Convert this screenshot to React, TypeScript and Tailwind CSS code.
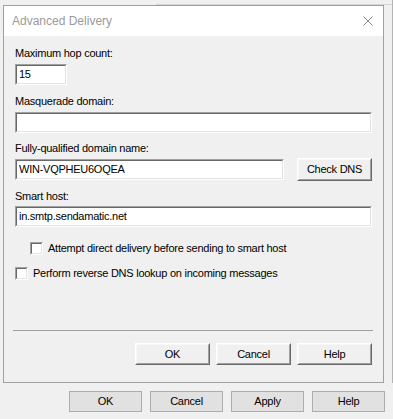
import React from "react";

const font = { fontFamily: '"Liberation Sans", Arial, sans-serif' };

function Sunken({ className = "", children }: { className?: string; children?: React.ReactNode }) {
  return (
    <div className={`border border-t-[#a0a0a0] border-l-[#a0a0a0] border-r-white border-b-white ${className}`}>
      <div className="h-full w-full border border-t-[#696969] border-l-[#696969] border-r-[#e3e3e3] border-b-[#e3e3e3] bg-white flex items-center pl-[2px] text-[11px] leading-[13px] tracking-[-0.25px] text-black">
        {children}
      </div>
    </div>
  );
}

function ClassicButton({ label, className = "" }: { label: string; className?: string }) {
  return (
    <div className={`border border-t-white border-l-white border-r-[#696969] border-b-[#696969] ${className}`}>
      <div className="h-full w-full border border-t-[#f8f8f8] border-l-[#f8f8f8] border-r-[#a0a0a0] border-b-[#a0a0a0] bg-[#f0f0f0] flex items-center justify-center text-[11px] leading-[13px] tracking-[-0.25px] text-black">
        {label}
      </div>
    </div>
  );
}

function FlatButton({ label }: { label: string }) {
  return (
    <div className="w-[73px] h-[21px] border border-[#adadad] bg-[#e1e1e1] flex items-center justify-center text-[11px] leading-[13px] tracking-[-0.25px] text-black">
      {label}
    </div>
  );
}

function CheckBox() {
  return (
    <div className="w-[13px] h-[13px] border border-t-[#a0a0a0] border-l-[#a0a0a0] border-r-white border-b-white shrink-0">
      <div className="w-full h-full border border-t-[#696969] border-l-[#696969] border-r-[#e3e3e3] border-b-[#e3e3e3] bg-white" />
    </div>
  );
}

function Label({ text }: { text: string }) {
  return (
    <div className="h-[13px] text-[11px] leading-[13px] tracking-[-0.25px] text-black whitespace-nowrap">{text}</div>
  );
}

export default function App() {
  return (
    <div className="w-[393px] h-[419px] bg-[#f0f0f0] overflow-hidden flex flex-col" style={font}>
      <div className="w-full h-[383px] border-r border-r-[#b4b4b4] flex flex-col">
        <div className="h-[5px] pt-[4px]">
          <div className="ml-[156px] h-[1px] bg-[#d4d4d4]" />
        </div>
        <div className="ml-[3px] w-[381px] h-[378px] border border-[#a0a0a0] flex flex-col bg-[#f0f0f0]">
          <div className="h-[30px] bg-white flex items-center justify-between pl-[8px] pr-[10px]">
            <span className="text-[12px] text-[#9a9a9a] leading-[14px]">Advanced Delivery</span>
            <svg width="10" height="10" viewBox="0 0 10 10">
              <path d="M0.5 0.5 L9.5 9.5 M9.5 0.5 L0.5 9.5" stroke="#8a8a8a" strokeWidth="1" fill="none" />
            </svg>
          </div>
          <div className="flex-1 flex flex-col px-[11px] pt-[11px] pb-[17px]">
            <Label text="Maximum hop count:" />
            <Sunken className="mt-[4px] w-[52px] h-[21px]">15</Sunken>

            <div className="mt-[10px]">
              <Label text="Masquerade domain:" />
            </div>
            <Sunken className="mt-[4px] w-full h-[21px]" />

            <div className="mt-[9px]">
              <Label text="Fully-qualified domain name:" />
            </div>
            <div className="mt-[3px] flex items-center justify-between">
              <Sunken className="w-[269px] h-[21px]">WIN-VQPHEU6OQEA</Sunken>
              <ClassicButton label="Check DNS" className="w-[75px] h-[23px]" />
            </div>

            <div className="mt-[9px]">
              <Label text="Smart host:" />
            </div>
            <Sunken className="mt-[3px] w-full h-[21px]">in.smtp.sendamatic.net</Sunken>

            <div className="mt-[15px] ml-[15px] flex items-center gap-[5px]">
              <CheckBox />
              <span className="text-[11px] leading-[13px] tracking-[-0.25px] text-black whitespace-nowrap">
                Attempt direct delivery before sending to smart host
              </span>
            </div>
            <div className="mt-[12px] flex items-center gap-[5px]">
              <CheckBox />
              <span className="text-[11px] leading-[13px] tracking-[-0.25px] text-black whitespace-nowrap">
                Perform reverse DNS lookup on incoming messages
              </span>
            </div>

            <div className="flex-1" />
            <div className="-mx-[2px] mr-[-1px] h-[1px] bg-[#a0a0a0]" />
            <div className="mt-[12px] flex justify-end gap-[6px]">
              <ClassicButton label="OK" className="w-[75px] h-[22px]" />
              <ClassicButton label="Cancel" className="w-[75px] h-[22px]" />
              <ClassicButton label="Help" className="w-[75px] h-[22px]" />
            </div>
          </div>
        </div>
      </div>
      <div className="mt-[8px] flex justify-end gap-[8px] pr-[8px]">
        <FlatButton label="OK" />
        <FlatButton label="Cancel" />
        <FlatButton label="Apply" />
        <FlatButton label="Help" />
      </div>
    </div>
  );
}
